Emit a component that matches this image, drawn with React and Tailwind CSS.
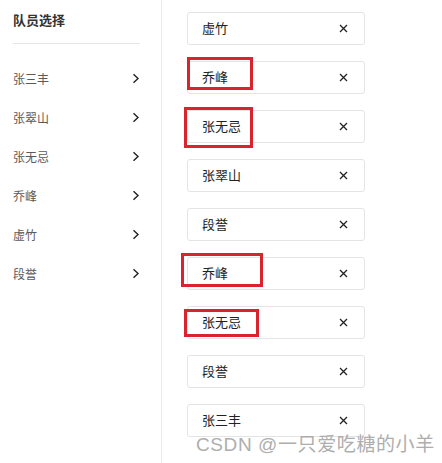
import React from "react";

const left = ["张三丰", "张翠山", "张无忌", "乔峰", "虚竹", "段誉"];
const right = ["虚竹", "乔峰", "张无忌", "张翠山", "段誉", "乔峰", "张无忌", "段誉", "张三丰"];

function Chevron() {
  return (
    <svg width="8" height="11" viewBox="0 0 8 11" fill="none">
      <path d="M1.5 1.2 L6 5.5 L1.5 9.8" stroke="#222" strokeWidth="1.4" />
    </svg>
  );
}

function Cross() {
  return (
    <svg width="9" height="9" viewBox="0 0 9 9" fill="none">
      <path d="M1 1 L8 8 M8 1 L1 8" stroke="#222" strokeWidth="1.3" />
    </svg>
  );
}

export default function App() {
  return (
    <div
      className="relative w-[442px] h-[463px] bg-white overflow-hidden flex"
      style={{ fontFamily: '"Noto Sans CJK SC", "Noto Sans", sans-serif' }}
    >
      <div className="w-[162px] h-full border-r border-[#ececec] pl-[13px] pr-[21px] flex flex-col">
        <div className="h-[38px] flex items-center text-[13px] font-bold text-[#333] pt-[1px]">
          队员选择
        </div>
        <div className="h-[6px] border-b border-[#e6e6e6]" />
        <div className="h-[15px]" />
        {left.map((n) => (
          <div key={n} className="h-[39px] flex items-center justify-between text-[12px] text-[#5a5a5a]">
            <span>{n}</span>
            <Chevron />
          </div>
        ))}
      </div>
      <div className="flex flex-col pl-[25px] pt-[12px] gap-[16px]">
        {right.map((n, i) => (
          <div
            key={i}
            className="w-[178px] h-[33px] border border-[#e4e4e4] rounded-[3px] flex items-center justify-between pl-[14px] pr-[16px] text-[13px] text-[#222]"
          >
            <span className="-mt-[1px]">{n}</span>
            <Cross />
          </div>
        ))}
      </div>

      <div className="absolute left-[187px] top-[57px] w-[66px] h-[33px] border-[3px] border-[#d9232d]" />
      <div className="absolute left-[184px] top-[107px] w-[69px] h-[41px] border-[3px] border-[#d9232d]" />
      <div className="absolute left-[181px] top-[253px] w-[82px] h-[34px] border-[3px] border-[#d9232d]" />
      <div className="absolute left-[184px] top-[309px] w-[75px] h-[28px] border-[3px] border-[#d9232d]" />

      <div
        className="absolute left-[196px] top-[431px] text-[19px] tracking-[0.6px] text-[#a6a6a6] opacity-90 whitespace-nowrap"
        style={{ fontFamily: '"Liberation Sans", "Noto Sans CJK SC", sans-serif' }}
      >
        CSDN @一只爱吃糖的小羊
      </div>
    </div>
  );
}
